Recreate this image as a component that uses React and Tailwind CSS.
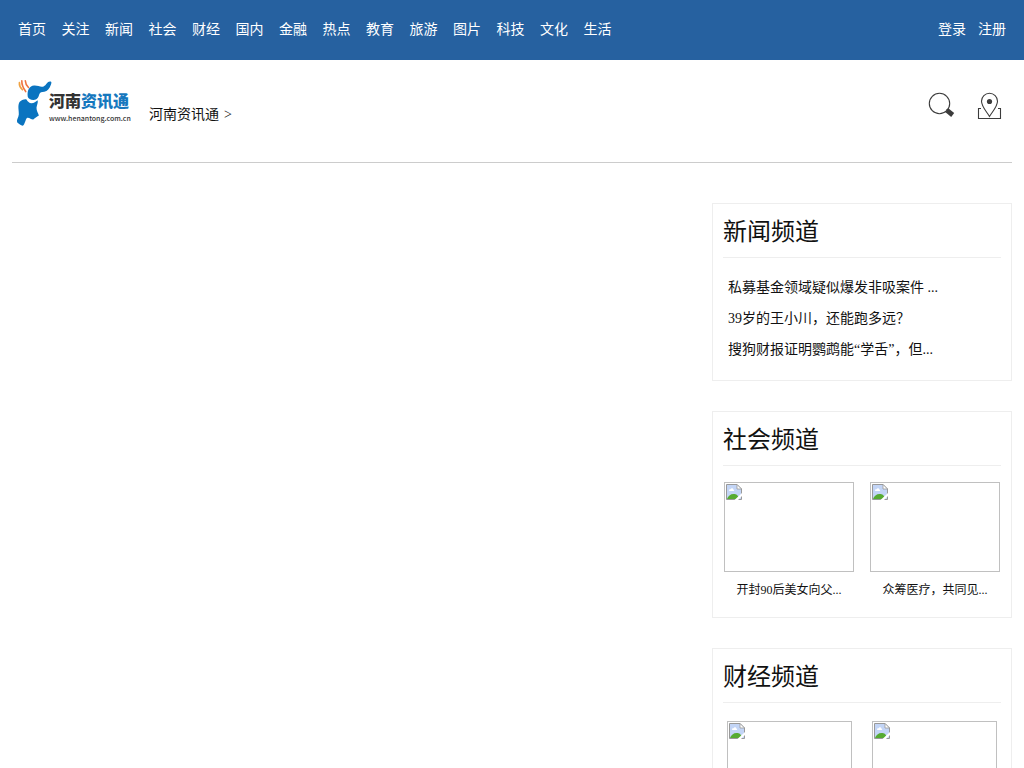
const NAV = ["首页", "关注", "新闻", "社会", "财经", "国内", "金融", "热点", "教育", "旅游", "图片", "科技", "文化", "生活"];

const NEWS = [
  "私募基金领域疑似爆发非吸案件 ...",
  "39岁的王小川，还能跑多远？",
  "搜狗财报证明鹦鹉能“学舌”，但...",
];

const SOCIETY = ["开封90后美女向父...", "众筹医疗，共同见..."];

export default function App() {
  return (
    <div className="min-h-screen bg-white text-sm text-[#111] font-['Liberation_Serif','Noto_Sans_CJK_SC',serif]">
      <TopBar />
      <div className="px-3">
        <Header />
        <main className="flex justify-end pt-10">
          <aside className="w-[300px] space-y-[30px]">
            <Channel title="新闻频道">
              <ul className="px-[5px] pt-3.5 pb-[15px]">
                {NEWS.map((item) => (
                  <li key={item} className="leading-[31px] whitespace-nowrap">
                    <a href="#">{item}</a>
                  </li>
                ))}
              </ul>
            </Channel>
            <Channel title="社会频道">
              <ul className="flex justify-between px-px pt-4 pb-[9px]">
                {SOCIETY.map((item) => (
                  <li key={item} className="w-[130px]">
                    <a href="#" className="block text-center text-xs leading-9">
                      <Thumb className="h-[90px]" />
                      {item}
                    </a>
                  </li>
                ))}
              </ul>
            </Channel>
            <Channel title="财经频道">
              <div className="flex justify-between px-1 pt-[18px]">
                <a href="#" className="w-[125px]" aria-label="财经"><Thumb className="h-[90px]" /></a>
                <a href="#" className="w-[125px]" aria-label="财经"><Thumb className="h-[90px]" /></a>
              </div>
            </Channel>
          </aside>
        </main>
      </div>
    </div>
  );
}

function TopBar() {
  return (
    <div className="flex justify-between bg-[#2661a0] px-3 text-white leading-[60px]">
      <nav>
        {NAV.map((item) => (
          <span key={item}>
            <a href="#" className="px-1.5">{item}</a>{" "}
          </span>
        ))}
      </nav>
      <div className="flex">
        <a href="#" className="px-1.5">登录</a>
        <a href="#" className="px-1.5">注册</a>
      </div>
    </div>
  );
}

function Header() {
  return (
    <header className="flex items-start justify-between border-b border-[#ccc] pb-8 pt-[15px]">
      <div className="flex items-end">
        <a href="#" aria-label="河南资讯通"><Logo /></a>
        <div className="flex gap-[5px] pb-[5px] pl-[9px] leading-5">
          <a href="#">河南资讯通</a>
          <span>&gt;</span>
        </div>
      </div>
      <div className="flex gap-5 pr-2.5 pt-4">
        <button type="button" aria-label="搜索">
          <svg className="block" width="28" height="28" viewBox="0 0 28 28" fill="none" stroke="#3c3c3c">
            <circle cx="11.5" cy="12.5" r="10.2" strokeWidth="1.1" />
            <path d="M18.5 18.5l2.5 2" strokeWidth="1.5" />
            <path d="M20.3 17.3l5.9 4.7-3 3.9-5.7-4.7z" fill="#3c3c3c" stroke="none" />
          </svg>
        </button>
        <button type="button" aria-label="位置">
          <svg className="block" width="26" height="28" viewBox="0 0 26 28" fill="none" stroke="#3c3c3c" strokeWidth="1.1">
            <path d="M13.5 25.5C10.5 20.5 5.5 15.5 5.5 10.3a8 8 0 0 1 16 0c0 5.2-5 10.2-8 15.2z" />
            <circle cx="13.5" cy="10.5" r="2.6" fill="#3c3c3c" stroke="none" />
            <path d="M5 17.5H2.5v10h22v-10H22" />
          </svg>
        </button>
      </div>
    </header>
  );
}

function Logo() {
  return (
    <svg className="block" width="128" height="55" viewBox="0 0 128 55">
      <g fill="none" strokeWidth="1.6" strokeLinecap="round">
        <path d="M7.4 7.5c-.3 2.8 1 5.3 3 7.3" stroke="#f0a343" />
        <path d="M9.8 5.8c-.1 4 1.3 7.3 3.9 10.8" stroke="#ee7440" />
        <path d="M13.3 5.8c.1 2.5 1.2 4.7 3.2 6.7" stroke="#ee7440" />
      </g>
      <g fill="#0a74c0">
        <path d="M15.7 21.5C15 15 17.5 11 22 10.5c4-.3 6.5 2 9.6.9C34.5 10.3 35 6.5 38 6.5c2 0 1.5 1.8.9 3.2-1.5 4.3-3.4 6.3-6.6 7-2.7.5-4.3.4-4.9 2.3-1 3.5-2.3 5.8-5.8 6-2.6.1-5.5-1.2-5.9-3.5z" />
        <path d="M7.5 27c1.5-2 6-3.5 7-2.5 1.2 2 2.6 3.7 5 3.7s4.5-1.6 6.1-3c.8 2-.8 4.8-1.1 7.5-.1 3 1.5 4.8 2.4 7.8-1.6 1-3.7 2-5.6 4-2 .3-3.5-2-6-1.7-1.8 1-1.7 4-3 6-.4 1-.9 1.9-1.7 1.9-1.8-.3-3.6-1.5-5.5-3.4-.7-2.8 1.4-4.7 1.7-7.8.2-4.7-1.4-8.6.7-12.5z" />
      </g>
      <text x="37" y="32" fontSize="16" fontWeight="900" className="font-['Noto_Sans_CJK_SC',sans-serif]">
        <tspan fill="#333">河南</tspan>
        <tspan fill="#1678be">资讯通</tspan>
      </text>
      <text x="37" y="46" fontSize="7" fontWeight="500" fill="#333" className="font-['Noto_Sans_CJK_SC',sans-serif]">
        www.henantong.com.cn
      </text>
    </svg>
  );
}

function Channel({ title, children }) {
  return (
    <section className="border border-[#eee] px-2.5">
      <h2 className="border-b border-[#eee] pb-px text-2xl leading-[52px] font-normal font-['Noto_Sans_CJK_SC',sans-serif]">
        {title}
      </h2>
      {children}
    </section>
  );
}

// empty picture frame with the missing-image mark
function Thumb({ className }) {
  return (
    <span className={`block border border-[#c0c0c0] p-px ${className}`}>
      <svg className="block" width="16" height="16" viewBox="0 0 16 16">
        <path d="M.5.5H11L15.5 5v10.5H.5z" fill="#c3d5f6" stroke="#999" />
        <path d="M3 6.5c0-1 .8-1.5 1.6-1.3.5-1.3 2.4-1.2 2.7.2 1 0 1.3 1.6.2 1.6h-4c-.3 0-.5-.2-.5-.5z" fill="#fff" />
        <path d="M1 15c1-3 3.5-5 6.5-5s4.5 1 5.5 5z" fill="#56ab32" />
        <path d="M11 .5V5h4.5z" fill="#fff" stroke="#999" strokeWidth=".8" />
        <path d="M16 9v3l-4 4H8.5z" fill="#fff" />
      </svg>
    </span>
  );
}
